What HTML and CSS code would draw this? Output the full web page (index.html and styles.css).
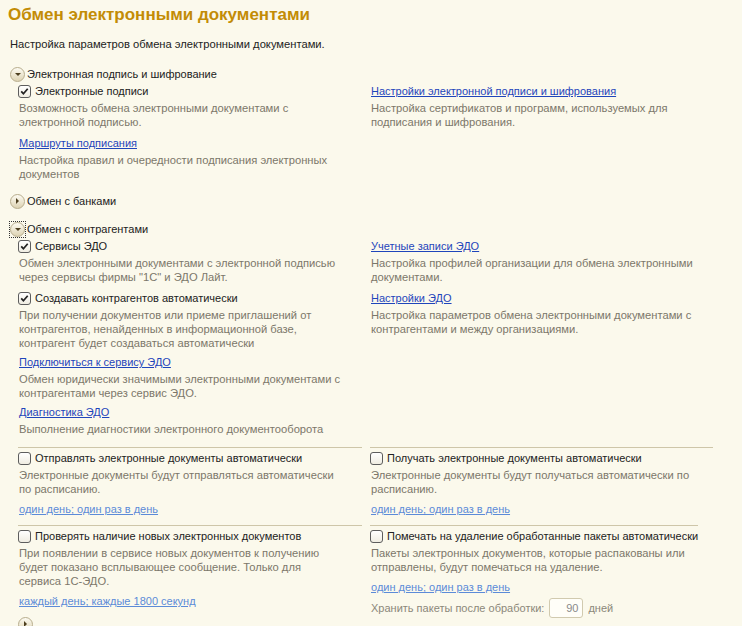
FILE: index.html
```html
<!DOCTYPE html>
<html lang="ru">
<head>
    <meta charset="UTF-8">
    <title>Обмен электронными документами</title>
    <link rel="stylesheet" href="styles.css">
</head>
<body>
<div class="page">
    <h1 class="title">Обмен электронными документами</h1>
    <div class="subtitle">Настройка параметров обмена электронными документами.</div>

    <!-- Электронная подпись -->
    <div class="group first">
        <div class="group-head"><span class="toggle"></span>Электронная подпись и шифрование</div>
        <div class="group-body">
            <div class="rows">
                <div class="item">
                    <label class="check"><span class="box"><svg viewBox="0 0 11 11"><path d="M2.2 5.4l2.2 2.3 4.3-5" /></svg></span>Электронные подписи</label>
                    <div class="desc">Возможность обмена электронными документами с электронной подписью.</div>
                </div>
                <div class="item right">
                    <a class="link" href="#">Настройки электронной подписи и шифрования</a>
                    <div class="desc">Настройка сертификатов и программ, используемых для подписания и шифрования.</div>
                </div>
                <div class="item">
                    <a class="link" href="#">Маршруты подписания</a>
                    <div class="desc">Настройка правил и очередности подписания электронных документов</div>
                </div>
                <div></div>
            </div>
        </div>
    </div>

    <!-- Банки -->
    <div class="group">
        <div class="group-head"><span class="toggle closed"></span>Обмен с банками</div>
    </div>

    <!-- Контрагенты -->
    <div class="group">
        <div class="group-head"><span class="focus"><span class="toggle"></span></span>Обмен с контрагентами</div>
        <div class="group-body">
            <div class="rows">
                <div class="item">
                    <label class="check"><span class="box"><svg viewBox="0 0 11 11"><path d="M2.2 5.4l2.2 2.3 4.3-5" /></svg></span>Сервисы ЭДО</label>
                    <div class="desc">Обмен электронными документами с электронной подписью через сервисы фирмы "1С" и ЭДО Лайт.</div>
                </div>
                <div class="item right">
                    <a class="link" href="#">Учетные записи ЭДО</a>
                    <div class="desc">Настройка профилей организации для обмена электронными документами.</div>
                </div>
                <div class="item">
                    <label class="check"><span class="box"><svg viewBox="0 0 11 11"><path d="M2.2 5.4l2.2 2.3 4.3-5" /></svg></span>Создавать контрагентов автоматически</label>
                    <div class="desc">При получении документов или приеме приглашений от контрагентов, ненайденных в информационной базе, контрагент будет создаваться автоматически</div>
                </div>
                <div class="item right">
                    <a class="link" href="#">Настройки ЭДО</a>
                    <div class="desc">Настройка параметров обмена электронными документами с контрагентами и между организациями.</div>
                </div>
                <div class="item tight">
                    <a class="link" href="#">Подключиться к сервису ЭДО</a>
                    <div class="desc">Обмен юридически значимыми электронными документами с контрагентами через сервис ЭДО.</div>
                </div>
                <div></div>
                <div class="item tight">
                    <a class="link" href="#">Диагностика ЭДО</a>
                    <div class="desc">Выполнение диагностики электронного документооборота</div>
                </div>
                <div></div>
            </div>

            <div class="auto">
                <div class="cell">
                    <label class="check"><span class="box"></span>Отправлять электронные документы автоматически</label>
                    <div class="desc">Электронные документы будут отправляться автоматически по расписанию.</div>
                    <a class="link sched" href="#">один день; один раз в день</a>
                </div>
                <div class="cell wide">
                    <label class="check"><span class="box"></span>Получать электронные документы автоматически</label>
                    <div class="desc">Электронные документы будут получаться автоматически по расписанию.</div>
                    <a class="link sched" href="#">один день; один раз в день</a>
                </div>
                <div class="cell">
                    <label class="check"><span class="box"></span>Проверять наличие новых электронных документов</label>
                    <div class="desc">При появлении в сервисе новых документов к получению будет показано всплывающее сообщение. Только для сервиса 1С-ЭДО.</div>
                    <a class="link sched" href="#">каждый день; каждые 1800 секунд</a>
                    <div class="group-head sub"><span class="toggle closed"></span></div>
                </div>
                <div class="cell wide short">
                    <label class="check"><span class="box"></span>Помечать на удаление обработанные пакеты автоматически</label>
                    <div class="desc">Пакеты электронных документов, которые распакованы или отправлены, будут помечаться на удаление.</div>
                    <a class="link sched" href="#">один день; один раз в день</a>
                    <div class="keep">Хранить пакеты после обработки: <span class="num">90</span> дней</div>
                </div>
            </div>
        </div>
    </div>
</div>
</body>
</html>
```

FILE: styles.css
```css
/* базовые стили */
body {
    margin: 0;
    background-color: #fbf9ec;
    font-family: "Liberation Sans", Arial, sans-serif;
    font-size: 11px;
    color: #333;
    overflow: hidden;
}

.page {
    padding-left: 10px;
}

.title {
    margin: 0 0 0 -2px;
    padding-top: 4px;
    font-size: 17px;
    line-height: 22px;
    font-weight: bold;
    color: #c38c06;
}

.subtitle {
    margin-top: 11px;
    font-size: 11.2px;
    line-height: 15px;
    color: #222;
}

/* группы */
.group {
    margin-top: 10px;
}

.group.first {
    margin-top: 13px;
}

.group-head {
    display: flex;
    align-items: center;
    gap: 2px;
    height: 18px;
    color: #222;
}

.group-head.sub {
    margin-top: 6px;
}

.toggle {
    position: relative;
    width: 13px;
    height: 13px;
    border: 1px solid #b7ad8d;
    border-radius: 50%;
    background: linear-gradient(#fdfbf2, #ddd3b3);
}

.toggle::after {
    content: "";
    position: absolute;
    left: 3.5px;
    top: 5px;
    border-left: 3px solid transparent;
    border-right: 3px solid transparent;
    border-top: 3px solid #4d3f1f;
}

.toggle.closed::after {
    left: 5px;
    top: 3.5px;
    border-top: 3px solid transparent;
    border-bottom: 3px solid transparent;
    border-left: 3px solid #4d3f1f;
    border-right: 0;
}

.focus {
    display: flex;
    outline: 1px dotted #333;
}

.group-body {
    padding-left: 8px;
    padding-bottom: 1px;
}

.rows {
    display: grid;
    grid-template-columns: 344px 343px;
    column-gap: 8px;
    row-gap: 6px;
}

.item.tight {
    margin-top: -2px;
}

/* флажки */
.check {
    display: flex;
    align-items: center;
    gap: 4px;
    height: 16px;
    white-space: nowrap;
    color: #222;
}

.box {
    display: flex;
    flex: none;
    width: 11px;
    height: 11px;
    border: 1px solid #5d5d5d;
    border-radius: 3px;
    background: linear-gradient(#ffffff, #f0ede2);
}

.box svg {
    width: 11px;
    height: 11px;
}

.box path {
    fill: none;
    stroke: #222;
    stroke-width: 1.7;
}

.desc {
    margin-top: 2px;
    padding-left: 1px;
    max-width: 324px;
    font-size: 11.2px;
    line-height: 14px;
    color: #7b776a;
}

.right .desc {
    max-width: 325px;
}

.link {
    display: block;
    width: max-content;
    margin-left: 1px;
    height: 16px;
    line-height: 16px;
    color: #1f45bb;
    text-decoration: underline;
}

.link.sched {
    margin-top: 5px;
    color: #5c8bd8;
}

/* автоматический обмен */
.auto {
    display: grid;
    grid-template-columns: 344px 343px;
    align-items: start;
    column-gap: 8px;
    margin-top: 11px;
}

.cell {
    border-top: 1px solid #cec6a9;
    padding: 2px 0 8px;
}

.cell.short {
    width: 328px;
}

.cell .desc {
    max-width: 318px;
}

.cell.wide .desc {
    max-width: 325px;
}

.keep {
    display: flex;
    align-items: center;
    gap: 5px;
    margin-top: 3px;
    padding-left: 1px;
    color: #8c887a;
}

.num {
    width: 28px;
    height: 18px;
    padding-right: 4px;
    line-height: 18px;
    text-align: right;
    border: 1px solid #d1caaf;
    border-radius: 3px;
    background-color: #fffef8;
    color: #8a8a8a;
}
```
